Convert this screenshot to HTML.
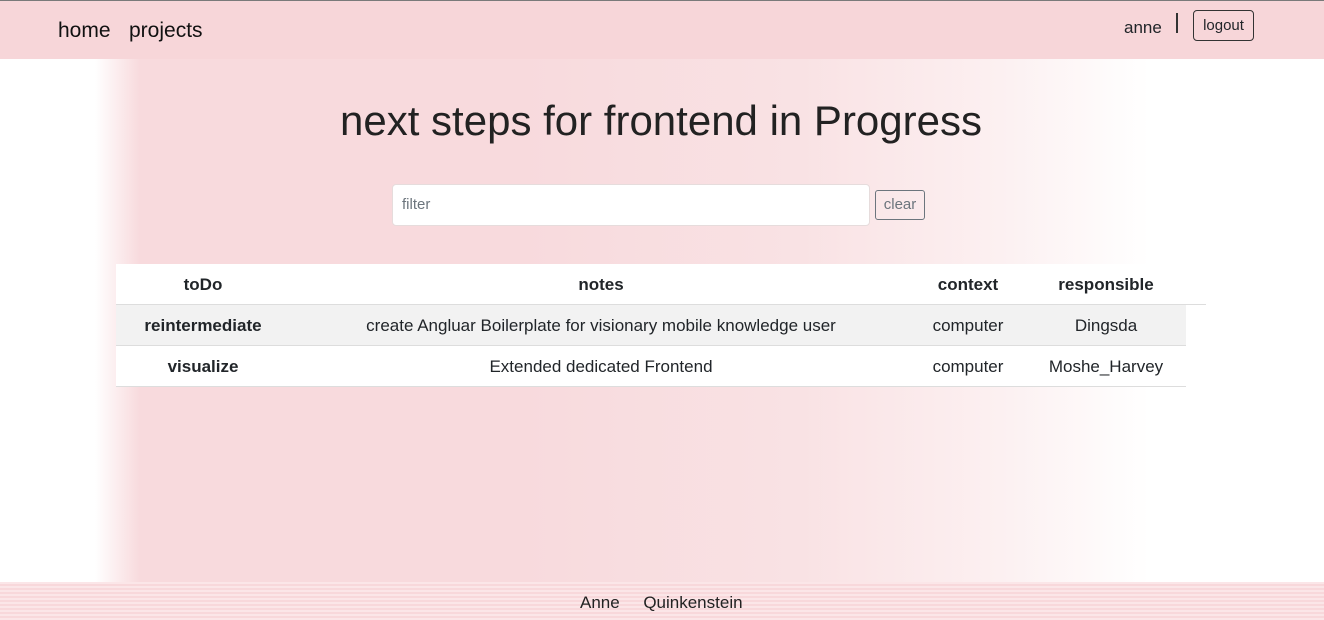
<!DOCTYPE html>
<html><head><style>
*{margin:0;padding:0;box-sizing:border-box}
body{width:1324px;height:620px;overflow:hidden;font-family:"Liberation Sans",sans-serif;color:#212529;background:#fff;position:relative}
.top{position:absolute;top:0;left:0;width:1324px;height:59px;background:#f7d6d9;border-top:1px solid #7a7a7a}
.nav{position:absolute;top:18px;font-size:21px;color:#111}
.main{position:absolute;top:59px;left:0;width:1324px;height:523px;background:linear-gradient(90deg,#fff 0px,#fff 95px,#f8dadd 140px,#f8dadd 520px,#f9e2e4 800px,#fcf0f1 1000px,#fff 1150px)}
.foot{position:absolute;top:582px;left:0;width:1324px;height:38px;background:repeating-linear-gradient(180deg,#fbe6e8 0 2px,#f8d8db 2px 4px)}
.t{position:absolute;text-align:center;font-size:17px;white-space:nowrap}
.b{font-weight:bold}
</style></head><body>
<div class="top">
<span class="nav" style="left:58px">home</span>
<span class="nav" style="left:129px">projects</span>
<span style="position:absolute;left:1124px;top:17px;font-size:17px">anne</span>
<span style="position:absolute;left:1176px;top:12px;width:2px;height:20px;background:#333"></span>
<span style="position:absolute;left:1193px;top:9px;width:61px;height:31px;border:1px solid #333;border-radius:4px;font-size:15px;text-align:center;line-height:29px">logout</span>
</div>
<div class="main">
<div style="position:absolute;top:38px;left:0;width:1322px;text-align:center;font-size:42px;color:#222">next steps for frontend in Progress</div>
<div style="position:absolute;left:392px;top:125px;width:478px;height:42px;background:#fff;border:1px solid #e6dcdc;border-radius:4px;font-size:15px;color:#6c757d;padding:11px 9px">filter</div>
<div style="position:absolute;left:875px;top:131px;width:50px;height:30px;border:1px solid #6c757d;border-radius:3px;font-size:15px;color:#6c757d;text-align:center;line-height:28px">clear</div>
<div style="position:absolute;left:116px;top:205px;width:1090px;height:41px;background:#fff;border-bottom:1px solid #ddd"></div>
<div style="position:absolute;left:116px;top:246px;width:1070px;height:41px;background:#f2f2f2;border-bottom:1px solid #ddd"></div>
<div style="position:absolute;left:116px;top:287px;width:1070px;height:41px;background:#fff;border-bottom:1px solid #ddd"></div>
</div>
<div class="foot"><div style="position:absolute;top:11px;left:580px;font-size:17px;color:#222">Anne&nbsp;&nbsp;&nbsp;&nbsp; Quinkenstein</div></div>
<div class="t b" style="left:103px;width:200px;top:275px">toDo</div>
<div class="t b" style="left:401px;width:400px;top:275px">notes</div>
<div class="t b" style="left:908px;width:120px;top:275px">context</div>
<div class="t b" style="left:1026px;width:160px;top:275px">responsible</div>
<div class="t b" style="left:103px;width:200px;top:316px">reintermediate</div>
<div class="t" style="left:301px;width:600px;top:316px">create Angluar Boilerplate for visionary mobile knowledge user</div>
<div class="t" style="left:908px;width:120px;top:316px">computer</div>
<div class="t" style="left:1026px;width:160px;top:316px">Dingsda</div>
<div class="t b" style="left:103px;width:200px;top:357px">visualize</div>
<div class="t" style="left:301px;width:600px;top:357px">Extended dedicated Frontend</div>
<div class="t" style="left:908px;width:120px;top:357px">computer</div>
<div class="t" style="left:1026px;width:160px;top:357px">Moshe_Harvey</div>
</body></html>
